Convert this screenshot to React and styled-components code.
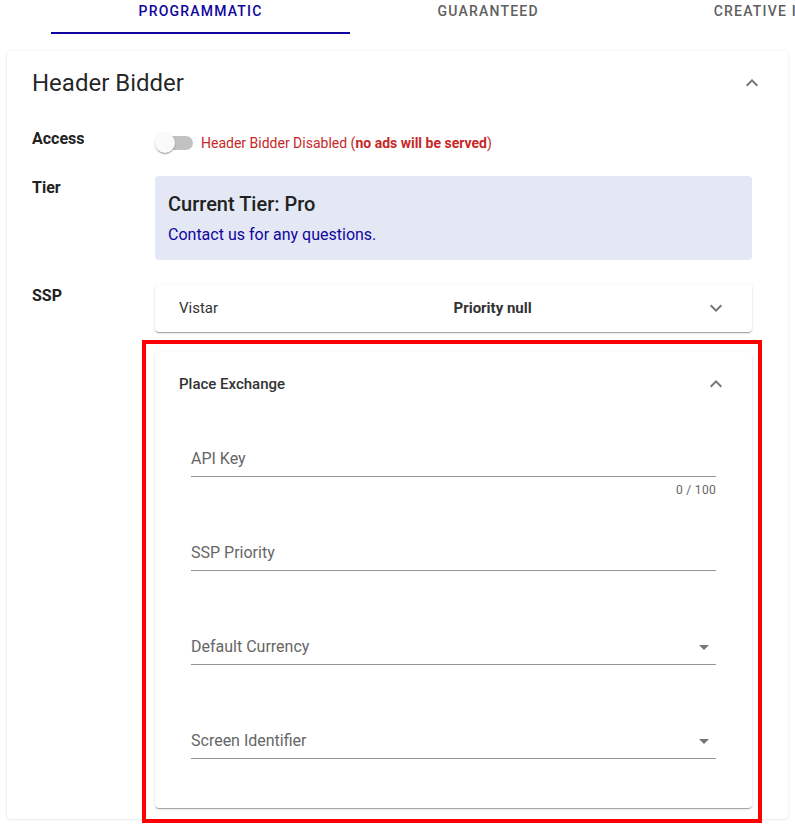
import React from 'react';
import styled, {createGlobalStyle, css} from 'styled-components';

const GlobalStyle = createGlobalStyle`
body{
  margin:0;
  background:#fff;
  font-family: Roboto, "Liberation Sans", Arial, sans-serif;
  color: rgba(0,0,0,0.87);
}
`

const Page = styled.div`
padding: 0 7px 17px;
width: 795px;
min-height: 835px;
box-sizing: border-box;
overflow: hidden;
`

const TabBar = styled.div`
display:flex;
margin: 0 -7px 0 44px;
height: 34px;
overflow: hidden;
`

const Tab = styled.div`
flex-shrink: 0;
box-sizing: border-box;
height: 34px;
padding: 0 87.5px;
font-size: 14px;
font-weight: 500;
line-height: 23px;
letter-spacing: 1.2px;
text-transform: uppercase;
white-space: nowrap;
color: #5f5f5f;
border-bottom: 2px solid transparent;

${p => p.$active && css`
color:#10069f;
border-bottom-color:#10069f;
`}
`

const Card = styled.div`
margin-top: 17px;
background:#fff;
border-radius: 4px;
box-shadow: 0 0 3px rgba(0,0,0,0.1), 0 1px 2px rgba(0,0,0,0.05);
padding: 0 36px 11px 25px;
`

const CardHeader = styled.div`
height: 62px;
display:flex;
align-items:center;
justify-content: space-between;
margin-right: -12px;
padding-top: 1px;
`

const Title = styled.h2`
margin:0;
font-size: 24px;
font-weight: 400;
line-height: 32px;
color: rgba(0,0,0,0.87);
`

const Body = styled.div`
padding-top: 13px;
`

const Row = styled.div`
display:flex;
align-items:flex-start;
margin-top: ${p => p.$top || 0}px;
`

const Label = styled.div`
width: 123px;
flex-shrink:0;
padding-top: 1px;
font-size: 16px;
font-weight: 700;
line-height: 22px;
color:#222;
`

const Content = styled.div`
flex:1;
min-width:0;
padding-top: ${p => p.$pad || 0}px;
`

const SwitchLine = styled.div`
display:flex;
align-items:center;
height: 24px;
`

const Switch = styled.div`
position: relative;
width: 38px;
height: 20px;
margin-right: 8px;
flex-shrink:0;
`

const Track = styled.div`
margin: 3px 0 0 3px;
width: 35px;
height: 14px;
border-radius: 7px;
background: #c2c2c2;
`

const Thumb = styled.div`
position:absolute;
left:0;
top:0;
width:20px;
height:20px;
border-radius:50%;
background:#fafafa;
box-shadow: 0 2px 1px -1px rgba(0,0,0,0.2), 0 1px 1px 0 rgba(0,0,0,0.14), 0 1px 3px 0 rgba(0,0,0,0.12);
`

const StatusText = styled.span`
font-size:14px;
line-height: 20px;
color:#c62828;
white-space:nowrap;
b{ font-weight:700; }
`

const TierBox = styled.div`
background:#e3e8f4;
border-radius: 4px;
padding: 14px 13px 13px;
`

const TierTitle = styled.div`
font-size:20px;
font-weight:500;
line-height:28px;
color:#222;
`

const TierLink = styled.div`
margin-top: 5px;
font-size:16px;
line-height:24px;
color:#10069f;
`

const Panels = styled.div`
display:flex;
flex-direction:column;
gap: 20px;
`

const PanelWrap = styled.div`
position:relative;
`

const Highlight = styled.div`
position:absolute;
left:-13px;
top:-12px;
right:-10px;
bottom:-15px;
border:4px solid #ff0000;
pointer-events:none;
`

const Panel = styled.div`
background:#fff;
border-radius:4px;
box-shadow: 0 2px 1px -1px rgba(0,0,0,0.2), 0 1px 1px 0 rgba(0,0,0,0.14), 0 1px 3px 0 rgba(0,0,0,0.12);
`

const Summary = styled.div`
display:grid;
grid-template-columns: 1fr 1fr;
align-items:center;
height: ${p => p.$open ? 64 : 48}px;
padding: 0 24px;
font-size:15px;
color:#333;
`

const SummaryName = styled.div`
font-weight: ${p => p.$open ? 500 : 400};
`

const SummaryRight = styled.div`
display:flex;
align-items:center;
justify-content:space-between;
font-weight:700;
`

const Details = styled.div`
padding: 13px 36px 26px;
display:flex;
flex-direction:column;
gap: 23px;
`

const Field = styled.div`
height:48px;
box-sizing:border-box;
display:flex;
align-items:flex-end;
justify-content:space-between;
border-bottom:1px solid #949494;
padding-bottom: 5px;
font-size:16px;
line-height:24px;
color:#666;
`

const Helper = styled.div`
margin-top:3px;
height:20px;
font-size:12px;
line-height:20px;
text-align:right;
color:#666;
letter-spacing: 0.3px;
`

const Icon = styled.svg`
width:24px;
height:24px;
fill:rgba(0,0,0,0.54);
flex-shrink:0;
display:block;
${p => p.$up && css`transform: rotate(180deg);`}
`

const Chevron = ({up}) => (
    <Icon viewBox="0 0 24 24" $up={up}>
        <path d="M16.59 8.59 12 13.17 7.41 8.59 6 10l6 6 6-6z"/>
    </Icon>
)

const DropArrow = () => (
    <Icon viewBox="0 0 24 24">
        <path d="M7 10l5 5 5-5z"/>
    </Icon>
)

const fields = [
    {label: 'API Key', helper: '0 / 100'},
    {label: 'SSP Priority', helper: ''},
    {label: 'Default Currency', helper: '', select: true},
    {label: 'Screen Identifier', helper: '', select: true},
]

const App = () => {
    return (
        <Page>
            <GlobalStyle/>
            <TabBar>
                <Tab $active>Programmatic</Tab>
                <Tab>Guaranteed</Tab>
                <Tab>Creative Insights</Tab>
            </TabBar>
            <Card>
                <CardHeader>
                    <Title>Header Bidder</Title>
                    <Chevron up/>
                </CardHeader>
                <Body>
                    <Row>
                        <Label>Access</Label>
                        <Content $pad={4}>
                            <SwitchLine>
                                <Switch>
                                    <Track/>
                                    <Thumb/>
                                </Switch>
                                <StatusText>Header Bidder Disabled (<b>no ads will be served</b>)</StatusText>
                            </SwitchLine>
                        </Content>
                    </Row>
                    <Row $top={21}>
                        <Label>Tier</Label>
                        <Content>
                            <TierBox>
                                <TierTitle>Current Tier: Pro</TierTitle>
                                <TierLink>Contact us for any questions.</TierLink>
                            </TierBox>
                        </Content>
                    </Row>
                    <Row $top={24}>
                        <Label>SSP</Label>
                        <Content>
                            <Panels>
                                <Panel>
                                    <Summary>
                                        <SummaryName>Vistar</SummaryName>
                                        <SummaryRight>Priority null<Chevron/></SummaryRight>
                                    </Summary>
                                </Panel>
                                <PanelWrap>
                                    <Panel>
                                        <Summary $open>
                                            <SummaryName $open>Place Exchange</SummaryName>
                                            <SummaryRight><span/><Chevron up/></SummaryRight>
                                        </Summary>
                                        <Details>
                                            {fields.map(f => (
                                                <div key={f.label}>
                                                    <Field>
                                                        <span>{f.label}</span>
                                                        {f.select && <DropArrow/>}
                                                    </Field>
                                                    <Helper>{f.helper}</Helper>
                                                </div>
                                            ))}
                                        </Details>
                                    </Panel>
                                    <Highlight/>
                                </PanelWrap>
                            </Panels>
                        </Content>
                    </Row>
                </Body>
            </Card>
        </Page>
    )
}

export default App;
